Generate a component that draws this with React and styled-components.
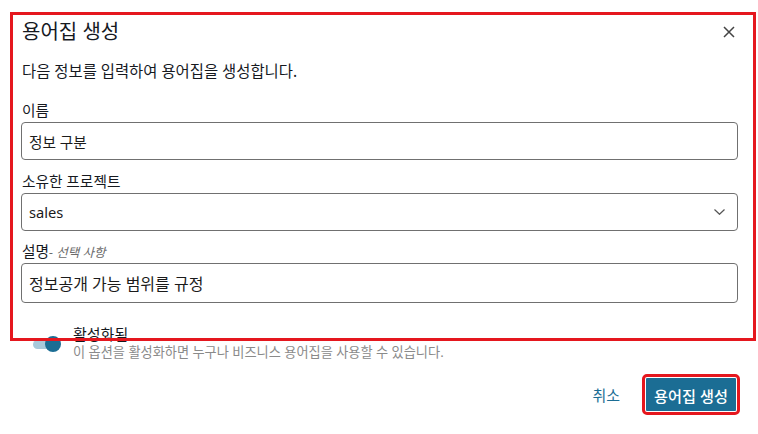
import React from 'react';
import styled, { createGlobalStyle } from 'styled-components';

const TEAL = '#1b6d94';
const MARK = '#e5171e';

const GlobalStyle = createGlobalStyle`
    html, body {
        margin: 0;
        padding: 0;
        background: #ffffff;
    }
    body {
        font-family: "Noto Sans", "Noto Sans CJK KR", sans-serif;
        color: #16191f;
    }
    * {
        box-sizing: border-box;
    }
`;

const Page = styled('div')`
    position: relative;
    width: 758px;
    height: 434px;
    padding: 18px 20px 0 21px;
    display: flex;
    flex-direction: column;
`;

const Header = styled('div')`
    display: flex;
    justify-content: space-between;
    align-items: center;
    height: 28px;
`;

const Title = styled('h2')`
    margin: 0;
    font-size: 20px;
    font-weight: 400;
    line-height: 28px;
    padding-left: 1px;
`;

const CloseButton = styled('button')`
    width: 18px;
    height: 18px;
    padding: 0;
    border: none;
    background: transparent;
    display: flex;
    align-items: center;
    justify-content: center;
    color: #444;
`;

const Intro = styled('p')`
    margin: 16px 0 0 1px;
    font-size: 15.4px;
    line-height: 20px;
`;

const Field = styled('div')`
    display: flex;
    flex-direction: column;
    margin-top: ${props => props.first ? '18px' : '10.5px'};
`;

const Label = styled('label')`
    font-size: 14.7px;
    line-height: 20px;
    height: 20px;
    margin: 0 0 2px 1px;
`;

const Optional = styled('span')`
    font-size: 12.5px;
    line-height: 20px;
    font-style: italic;
    color: #6b6b6b;
`;

const Box = styled('div')`
    height: ${props => props.large ? '40px' : '38px'};
    border: 1px solid #707070;
    border-radius: 4px;
    padding: 0 12px 0 7px;
    display: flex;
    align-items: center;
    justify-content: space-between;
    font-size: ${props => props.large ? '16px' : '14.7px'};
    color: #1b1b1b;
`;

const ToggleRow = styled('div')`
    display: flex;
    align-items: center;
    gap: 12px;
    margin-top: 21px;
    padding-left: 12px;
`;

const Switch = styled('div')`
    position: relative;
    width: 28px;
    height: 16px;
    flex-shrink: 0;
    margin-top: 2px;
`;

const Track = styled('span')`
    position: absolute;
    left: 0;
    top: 4px;
    width: 24px;
    height: 9px;
    border-radius: 5px;
    background: #a8c9da;
`;

const Knob = styled('span')`
    position: absolute;
    right: 0;
    top: 0;
    width: 16px;
    height: 16px;
    border-radius: 50%;
    background: ${TEAL};
`;

const ToggleText = styled('div')`
    display: flex;
    flex-direction: column;
`;

const ToggleLabel = styled('span')`
    font-size: 15px;
    line-height: 20px;
`;

const ToggleHint = styled('span')`
    font-size: 13.2px;
    line-height: 17px;
    color: #8a8a8a;
`;

const Footer = styled('div')`
    display: flex;
    justify-content: flex-end;
    align-items: center;
    gap: 26px;
    margin-top: 17px;
    padding-right: 2px;
`;

const LinkButton = styled('button')`
    border: none;
    background: transparent;
    padding: 0;
    font-family: inherit;
    font-size: 15px;
    color: ${TEAL};
`;

const PrimaryButton = styled('button')`
    width: 90px;
    height: 33px;
    padding: 0;
    border: none;
    border-radius: 1px;
    background: ${TEAL};
    color: #ffffff;
    font-family: inherit;
    font-size: 15.2px;
    font-weight: 500;
    outline: 3px solid ${MARK};
    outline-offset: 1px;
`;

// annotation frame drawn over the form
const Highlight = styled('div')`
    position: absolute;
    left: 10px;
    top: 12px;
    width: 746px;
    height: 329px;
    border: 3px solid ${MARK};
    pointer-events: none;
`;

const CloseIcon = () => (
    <svg width="12" height="12" viewBox="0 0 12 12" fill="none" stroke="currentColor" strokeWidth="1.5">
        <path d="M1 1L11 11M11 1L1 11" />
    </svg>
);

const Chevron = () => (
    <svg width="11" height="6" viewBox="0 0 11 6" fill="none" stroke="#555" strokeWidth="1.2">
        <path d="M0.5 0.5L5.5 5.3L10.5 0.5" />
    </svg>
);

export default function App() {
    return (
        <>
            <GlobalStyle />
            <Page>
                <Header>
                    <Title>용어집 생성</Title>
                    <CloseButton aria-label="닫기"><CloseIcon /></CloseButton>
                </Header>
                <Intro>다음 정보를 입력하여 용어집을 생성합니다.</Intro>
                <Field first>
                    <Label>이름</Label>
                    <Box>정보 구분</Box>
                </Field>
                <Field>
                    <Label>소유한 프로젝트</Label>
                    <Box>sales<Chevron /></Box>
                </Field>
                <Field>
                    <Label>설명<Optional>- 선택 사항</Optional></Label>
                    <Box large>정보공개 가능 범위를 규정</Box>
                </Field>
                <ToggleRow>
                    <Switch>
                        <Track />
                        <Knob />
                    </Switch>
                    <ToggleText>
                        <ToggleLabel>활성화됨</ToggleLabel>
                        <ToggleHint>이 옵션을 활성화하면 누구나 비즈니스 용어집을 사용할 수 있습니다.</ToggleHint>
                    </ToggleText>
                </ToggleRow>
                <Footer>
                    <LinkButton>취소</LinkButton>
                    <PrimaryButton>용어집 생성</PrimaryButton>
                </Footer>
                <Highlight />
            </Page>
        </>
    );
}
